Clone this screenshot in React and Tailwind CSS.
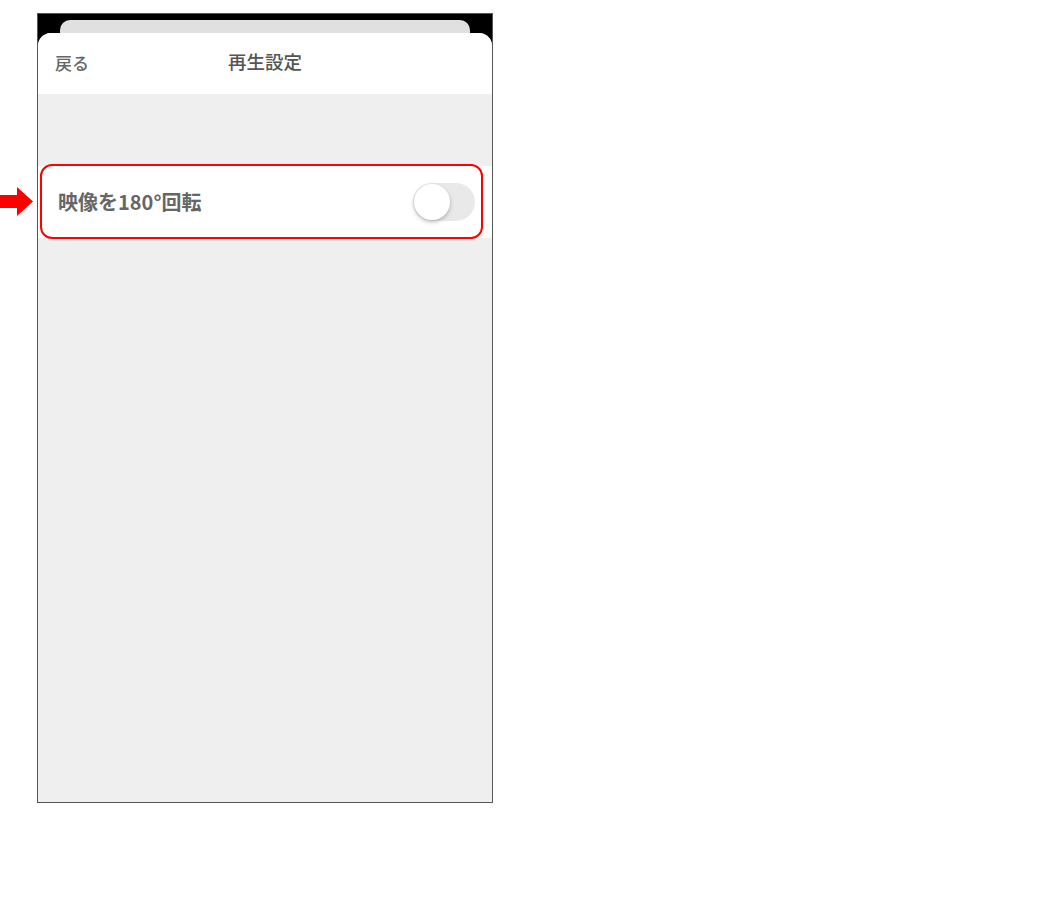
import React from "react";

const font = { fontFamily: '"Noto Sans CJK JP", "Noto Sans", sans-serif' };

export default function App() {
  return (
    <div className="relative w-[1058px] h-[906px] bg-white" style={font}>
      {/* annotation arrow */}
      <svg className="absolute left-0 top-[187px]" width="34" height="29" viewBox="0 0 34 29">
        <polygon points="0,8 17,8 17,0 33,14.5 17,29 17,21 0,21" fill="#ff0000" />
      </svg>

      <div className="ml-[37px] pt-[13px]">
        <div className="w-[456px] h-[790px] border border-[#555] bg-black flex flex-col">
          <div className="pt-[6px] px-[22px]">
            <div className="h-[13px] rounded-t-[10px] bg-[#e0e0e0]" />
          </div>
          <div className="flex-1 flex flex-col rounded-t-[13px] bg-[#efefef] overflow-hidden">
            <div className="h-[61px] bg-white relative flex items-center justify-center pb-[4px]">
              <span className="absolute left-[17px] top-[17px] text-[17px] text-[#666] font-medium">戻る</span>
              <span className="text-[18.5px] text-[#555] font-medium">再生設定</span>
            </div>
            <div className="h-[72px]" />
            <div className="relative h-[72px] bg-white flex items-center justify-between pl-[20px] pr-[17px]">
              <span className="text-[20px] font-bold text-[#666]">映像を180°回転</span>
              <div className="w-[62px] h-[38px] rounded-full bg-[#e9e9e9] p-[1px]">
                <div className="w-[36px] h-[36px] rounded-full bg-white shadow-[0_2px_4px_rgba(0,0,0,0.25)]" />
              </div>
              <div className="absolute left-[2px] top-[-2px] w-[443px] h-[75px] border-[2.5px] border-[#ff0000] rounded-[12px] pointer-events-none" />
            </div>
            <div className="flex-1" />
          </div>
        </div>
      </div>
    </div>
  );
}
